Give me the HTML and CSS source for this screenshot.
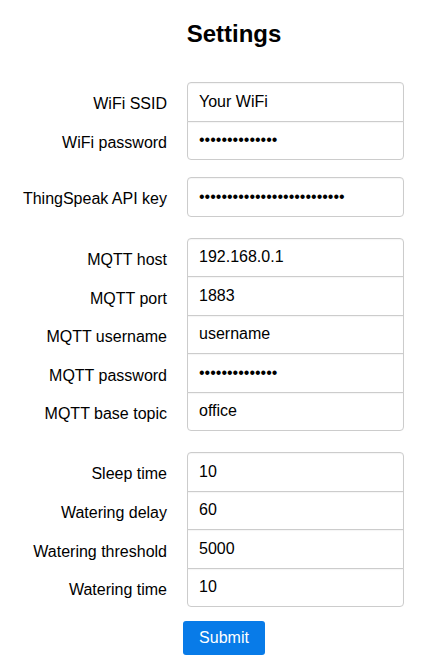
FILE: index.html
```html
<!DOCTYPE html>
<html>
<head>
<meta charset="utf-8">
<title>Settings</title>
<link rel="stylesheet" href="styles.css">
</head>
<body>
<div class="page">
  <h2 class="title">Settings</h2>
  <form class="form">
    <div class="group group-tight">
      <label class="label">WiFi SSID</label>
      <input class="field first" type="text" value="Your WiFi">
      <label class="label">WiFi password</label>
      <input class="field last" type="password" value="12345678901234">
    </div>
    <div class="group">
      <label class="label">ThingSpeak API key</label>
      <input class="field first last" type="password" value="12345678901234567890123456">
    </div>
    <div class="group">
      <label class="label">MQTT host</label>
      <input class="field first" type="text" value="192.168.0.1">
      <label class="label">MQTT port</label>
      <input class="field" type="text" value="1883">
      <label class="label">MQTT username</label>
      <input class="field" type="text" value="username">
      <label class="label">MQTT password</label>
      <input class="field" type="password" value="12345678901234">
      <label class="label">MQTT base topic</label>
      <input class="field last" type="text" value="office">
    </div>
    <div class="group">
      <label class="label">Sleep time</label>
      <input class="field first" type="text" value="10">
      <label class="label">Watering delay</label>
      <input class="field" type="text" value="60">
      <label class="label">Watering threshold</label>
      <input class="field" type="text" value="5000">
      <label class="label">Watering time</label>
      <input class="field last" type="text" value="10">
    </div>
    <div class="actions">
      <button class="submit" type="button">Submit</button>
    </div>
  </form>
</div>
</body>
</html>
```
FILE: styles.css
```css
html, body {
  margin: 0;
  padding: 0;
  background: #ffffff;
}

body {
  font-family: "Liberation Sans", Arial, sans-serif;
  color: #000000;
}

.page {
  padding-top: 20px;
}

.title {
  margin: 0;
  font-size: 24px;
  line-height: 28px;
  font-weight: bold;
  text-align: center;
  padding-left: 27px;
}

.form {
  margin-top: 34px;
  display: flex;
  flex-direction: column;
  gap: 21px;
}

.group {
  display: grid;
  grid-template-columns: 167px 217px;
  column-gap: 20px;
}

.group-tight {
  margin-bottom: -4px;
}

.label {
  font-size: 16px;
  text-align: right;
  align-self: center;
  padding-top: 5px;
  white-space: nowrap;
}

.field {
  box-sizing: border-box;
  width: 217px;
  height: 39.5px;
  margin: -1px 0 0 0;
  padding: 0 11px;
  border: 1px solid #cccccc;
  border-radius: 0;
  font-family: "Liberation Sans", Arial, sans-serif;
  font-size: 16px;
  color: #000000;
  background: #ffffff;
  box-shadow: inset 0 1px 1px rgba(0, 0, 0, 0.04);
  outline: none;
}

.field.first {
  margin-top: 0;
  border-top-left-radius: 4px;
  border-top-right-radius: 4px;
}

.field.last {
  border-bottom-left-radius: 4px;
  border-bottom-right-radius: 4px;
}

.actions {
  display: flex;
  margin-top: -7px;
  padding-left: 183px;
}

.submit {
  box-sizing: border-box;
  width: 82px;
  height: 34px;
  padding: 0;
  border: none;
  border-radius: 3px;
  background: #087be8;
  color: #ffffff;
  font-family: "Liberation Sans", Arial, sans-serif;
  font-size: 16px;
}
```
